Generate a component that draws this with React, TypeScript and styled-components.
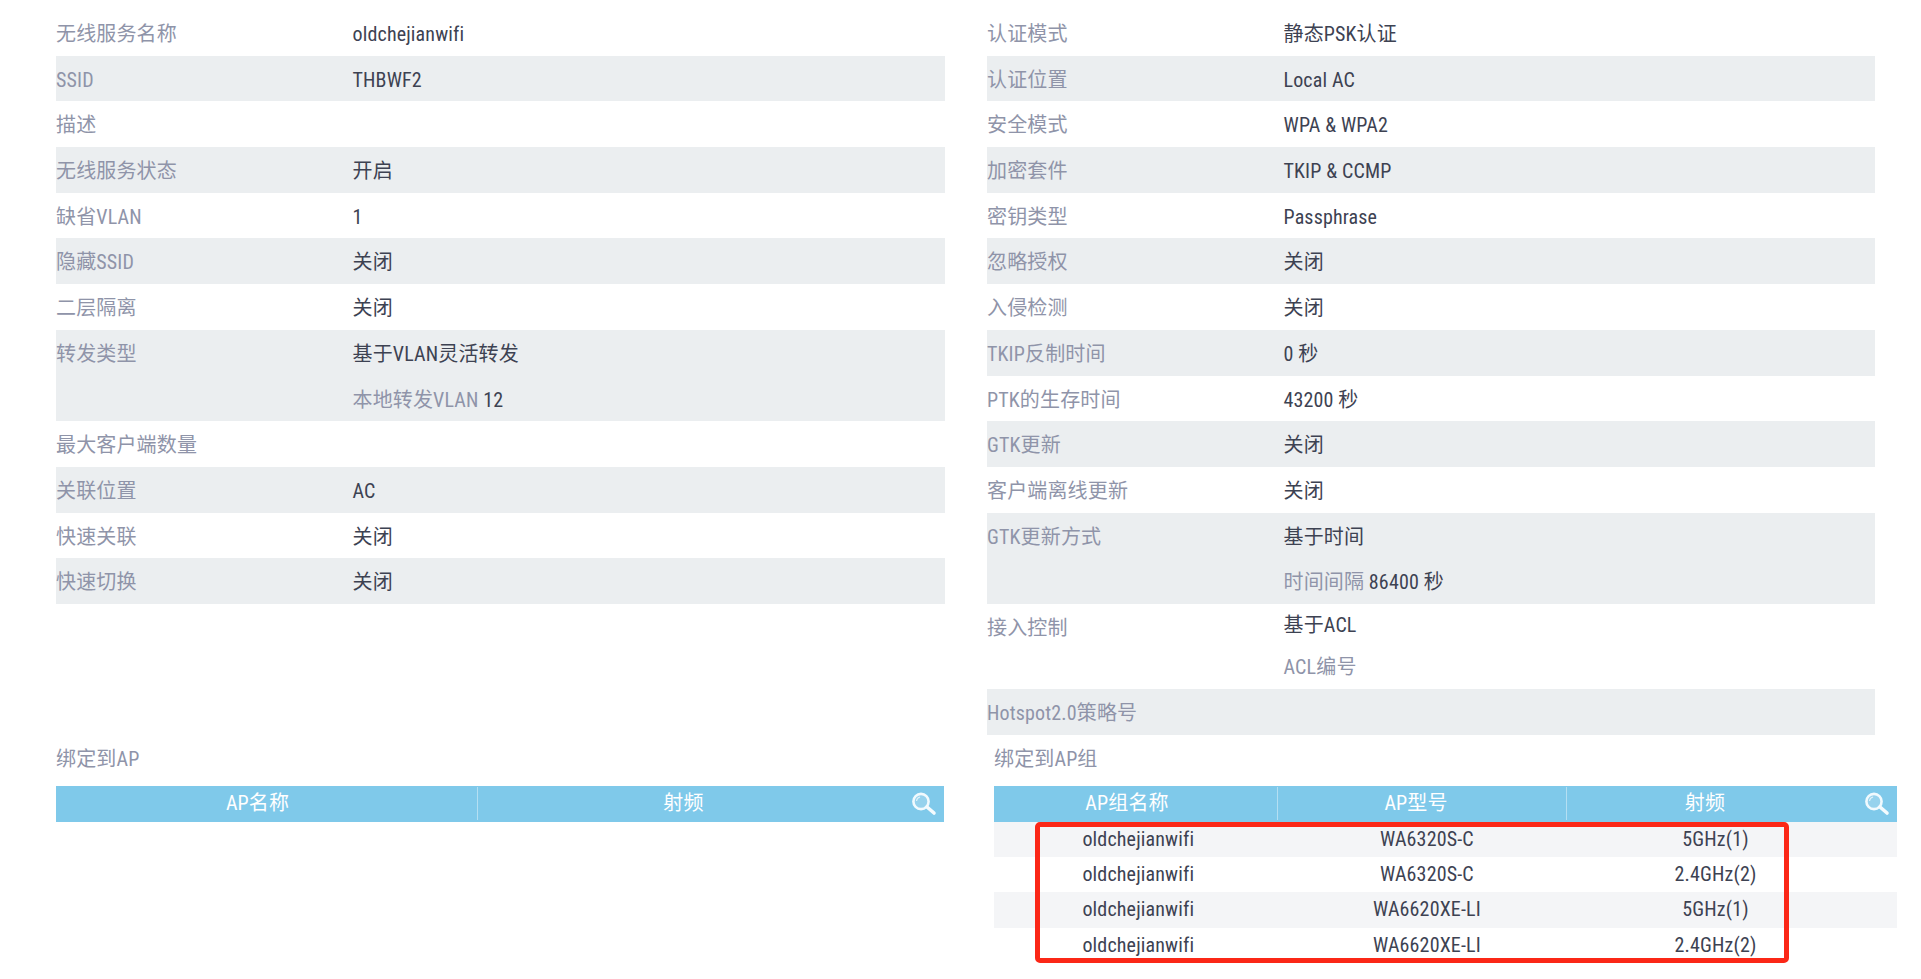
import * as React from 'react';
import styled, { createGlobalStyle } from 'styled-components';

const GlobalStyle = createGlobalStyle`
    html, body {
        margin: 0;
        padding: 0;
        background: #fff;
    }
    body {
        font-family: Roboto, "Noto Sans CJK SC", sans-serif;
        font-stretch: 75%;
        font-size: 20px;
        letter-spacing: 0.15px;
        color: #3d4252;
    }
`;

const Page = styled.div`
    width: 1921px;
    height: 979px;
    padding-top: 10px;
    box-sizing: border-box;
    overflow: hidden;
    position: relative;
`;

const Panels = styled.div`
    display: grid;
    grid-template-columns: 889px 888px;
    column-gap: 42px;
    margin-left: 56px;
`;

const Rows = styled.div`
    display: flex;
    flex-direction: column;

    & > :nth-child(even) {
        background: #ebeef0;
    }
`;

const Row = styled.div`
    display: grid;
    grid-template-columns: 296.5px 1fr;
`;

const Label = styled.div`
    height: 45.7px;
    padding-top: 2px;
    box-sizing: border-box;
    line-height: 45.5px;
    color: #8f94a9;
`;

const Values = styled.div`
    display: flex;
    flex-direction: column;
`;

const Value = styled.div<{ $compact?: boolean }>`
    height: ${p => (p.$compact ? '42.5px' : '45.7px')};
    padding-top: 2px;
    box-sizing: border-box;
    line-height: ${p => (p.$compact ? '39.5px' : '45.5px')};
`;

const SubLabel = styled.span`
    color: #8f94a9;
`;

const Bindings = styled.div`
    display: grid;
    grid-template-columns: 888px 903px;
    column-gap: 50px;
    margin-left: 56px;
`;

const Binding = styled.section``;

const BindingTitle = styled.div`
    height: 51px;
    line-height: 49px;
    color: #8f94a9;
`;

const Head = styled.div<{ $columns: string }>`
    display: grid;
    grid-template-columns: ${p => p.$columns};
    height: 36px;
    background: #7fc9ea;
    color: #fff;
    position: relative;
`;

const HeadCell = styled.div<{ $trim: number; $rule?: boolean }>`
    height: 36px;
    line-height: 35.5px;
    text-align: center;
    box-sizing: border-box;
    padding-right: ${p => p.$trim}px;
    position: relative;

    ${p =>
        p.$rule &&
        `&::before {
            content: '';
            position: absolute;
            left: 0;
            top: 1px;
            bottom: 2px;
            width: 1px;
            background: #b4dff2;
        }`}
`;

const SearchIcon = styled.svg`
    position: absolute;
    right: 7px;
    top: 6px;
    width: 26px;
    height: 24px;
`;

const BodyRow = styled.div`
    display: grid;
    grid-template-columns: repeat(3, 288.6px) 1fr;
    height: 35.3px;
    line-height: 34.5px;
    text-align: center;

    &:nth-child(odd) {
        background: #f4f5f7;
    }
`;

const Highlight = styled.div`
    position: absolute;
    left: 1035px;
    top: 822px;
    width: 754px;
    height: 141px;
    box-sizing: border-box;
    border: solid #fb2717;
    border-width: 5px 5px 5px 5px;
    border-radius: 5px;
`;

type Line = { text: React.ReactNode; compact?: boolean };
type Item = { label: string; lines?: Line[] };

const one = (label: string, text?: string): Item => ({
    label,
    lines: text ? [{ text }] : undefined,
});

const leftItems: Item[] = [
    one('无线服务名称', 'oldchejianwifi'),
    one('SSID', 'THBWF2'),
    one('描述'),
    one('无线服务状态', '开启'),
    one('缺省VLAN', '1'),
    one('隐藏SSID', '关闭'),
    one('二层隔离', '关闭'),
    {
        label: '转发类型',
        lines: [
            { text: '基于VLAN灵活转发' },
            { text: <><SubLabel>本地转发VLAN</SubLabel> 12</> },
        ],
    },
    one('最大客户端数量'),
    one('关联位置', 'AC'),
    one('快速关联', '关闭'),
    one('快速切换', '关闭'),
];

const rightItems: Item[] = [
    one('认证模式', '静态PSK认证'),
    one('认证位置', 'Local AC'),
    one('安全模式', 'WPA & WPA2'),
    one('加密套件', 'TKIP & CCMP'),
    one('密钥类型', 'Passphrase'),
    one('忽略授权', '关闭'),
    one('入侵检测', '关闭'),
    one('TKIP反制时间', '0 秒'),
    one('PTK的生存时间', '43200 秒'),
    one('GTK更新', '关闭'),
    one('客户端离线更新', '关闭'),
    {
        label: 'GTK更新方式',
        lines: [
            { text: '基于时间' },
            { text: <><SubLabel>时间间隔</SubLabel> 86400 秒</> },
        ],
    },
    {
        label: '接入控制',
        lines: [
            { text: '基于ACL', compact: true },
            { text: <SubLabel>ACL编号</SubLabel>, compact: true },
        ],
    },
    one('Hotspot2.0策略号'),
];

const apGroups = [
    ['oldchejianwifi', 'WA6320S-C', '5GHz(1)'],
    ['oldchejianwifi', 'WA6320S-C', '2.4GHz(2)'],
    ['oldchejianwifi', 'WA6620XE-LI', '5GHz(1)'],
    ['oldchejianwifi', 'WA6620XE-LI', '2.4GHz(2)'],
];

const Magnifier = () => (
    <SearchIcon viewBox="0 0 26 24">
        <circle cx="10" cy="9.5" r="7.6" fill="#ffffff" fillOpacity="0.18" stroke="#f1fafe" strokeWidth="2.6" />
        <path d="M5.5 9a4.6 4.6 0 0 1 3.6-4" fill="none" stroke="#ffffff" strokeOpacity="0.7" strokeWidth="1.2" />
        <path d="M16 15l7 6" stroke="#f4fbfe" strokeWidth="3.6" strokeLinecap="round" />
    </SearchIcon>
);

const InfoList: React.FC<{ items: Item[] }> = ({ items }) => (
    <Rows>
        {items.map(item => (
            <Row key={item.label}>
                <Label>{item.label}</Label>
                <Values>
                    {(item.lines ?? [{ text: '' }]).map((line: Line, i) => (
                        <Value key={i} $compact={line.compact}>{line.text}</Value>
                    ))}
                </Values>
            </Row>
        ))}
    </Rows>
);

export default function App() {
    return (
        <Page>
            <GlobalStyle />
            <Panels>
                <InfoList items={leftItems} />
                <InfoList items={rightItems} />
            </Panels>
            <Bindings>
                <Binding>
                    <BindingTitle>绑定到AP</BindingTitle>
                    <Head $columns="421px 1fr">
                        <HeadCell $trim={18}>AP名称</HeadCell>
                        <HeadCell $trim={54} $rule>射频</HeadCell>
                        <Magnifier />
                    </Head>
                </Binding>
                <Binding>
                    <BindingTitle>绑定到AP组</BindingTitle>
                    <Head $columns="283px 289px 1fr">
                        <HeadCell $trim={17}>AP组名称</HeadCell>
                        <HeadCell $trim={11} $rule>AP型号</HeadCell>
                        <HeadCell $trim={53} $rule>射频</HeadCell>
                        <Magnifier />
                    </Head>
                    <div>
                        {apGroups.map((row, i) => (
                            <BodyRow key={i}>
                                {row.map(cell => <div key={cell}>{cell}</div>)}
                            </BodyRow>
                        ))}
                    </div>
                </Binding>
            </Bindings>
            <Highlight />
        </Page>
    );
}
